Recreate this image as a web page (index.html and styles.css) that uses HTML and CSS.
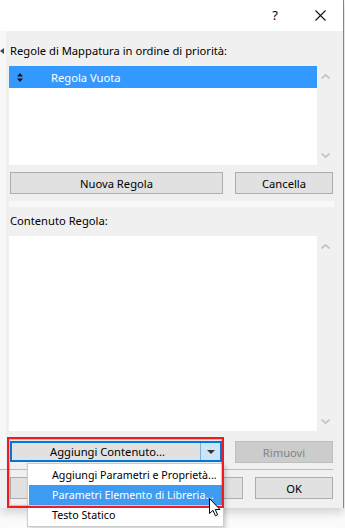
FILE: index.html
```html
<!DOCTYPE html>
<html lang="it">
<head>
    <meta charset="UTF-8">
    <title>Regole di Mappatura</title>
    <link rel="stylesheet" href="styles.css">
</head>
<body>
    <div class="window">
        <div class="titlebar">
            <span class="help">?</span>
            <span class="close">
                <svg width="11" height="11" viewBox="0 0 11 11"><path d="M0.5 0.5L10.5 10.5M10.5 0.5L0.5 10.5" stroke="#111" stroke-width="1.1" fill="none"/></svg>
            </span>
        </div>
        <div class="client">
            <div class="side"><span class="side-arrow"></span></div>
            <div class="main">
                <div class="label first">Regole di Mappatura in ordine di priorità:</div>
                <div class="list-row">
                    <div class="listbox rules">
                        <div class="rule selected">
                            <svg class="updown" width="6" height="9" viewBox="0 0 6 9"><path d="M3 0L6 3.5H0Z M3 9L6 5.5H0Z" fill="#111"/></svg>
                            <span>Regola Vuota</span>
                        </div>
                    </div>
                    <div class="scroll">
                        <svg width="9" height="5" viewBox="0 0 9 5"><path d="M0.5 4.5L4.5 0.8L8.5 4.5" stroke="#c2c2c2" stroke-width="1.6" fill="none"/></svg>
                        <svg width="9" height="5" viewBox="0 0 9 5"><path d="M0.5 0.5L4.5 4.2L8.5 0.5" stroke="#c2c2c2" stroke-width="1.6" fill="none"/></svg>
                    </div>
                </div>
                <div class="btn-row">
                    <button class="btn wide">Nuova Regola</button>
                    <button class="btn narrow">Cancella</button>
                </div>
                <div class="splitter"></div>
                <div class="label">Contenuto Regola:</div>
                <div class="list-row">
                    <div class="listbox content"></div>
                    <div class="scroll">
                        <svg width="9" height="5" viewBox="0 0 9 5"><path d="M0.5 4.5L4.5 0.8L8.5 4.5" stroke="#c2c2c2" stroke-width="1.6" fill="none"/></svg>
                        <svg width="9" height="5" viewBox="0 0 9 5"><path d="M0.5 0.5L4.5 4.2L8.5 0.5" stroke="#c2c2c2" stroke-width="1.6" fill="none"/></svg>
                    </div>
                </div>
                <div class="btn-row add-row">
                    <div class="split-btn">
                        <span class="split-main">Aggiungi Contenuto...</span>
                        <span class="split-drop"><span class="tri"></span></span>
                    </div>
                    <button class="btn narrow disabled">Rimuovi</button>
                </div>
            </div>
        </div>
        <div class="footer">
            <!-- these two are covered by the popup menu -->
            <button class="btn foot-a"></button>
            <button class="btn foot-b"></button>
            <button class="btn ok">OK</button>
            <span class="grip"></span>
        </div>
    </div>

    <div class="highlight"></div>
    <ul class="menu">
        <li>Aggiungi Parametri e Proprietà...</li>
        <li class="active">Parametri Elemento di Libreria...</li>
        <li>Testo Statico</li>
    </ul>
    <svg class="cursor" width="12" height="19" viewBox="0 0 12 19"><path d="M0.5 0.5V15.5L4 12.3L6.4 17.8L8.6 16.8L6.3 11.5H11Z" fill="#fff" stroke="#000" stroke-width="1" stroke-linejoin="round"/></svg>
</body>
</html>
```

FILE: styles.css
```css
body {
    margin: 0;
    width: 345px;
    height: 528px;
    overflow: hidden;
    background-color: #fbfbfb;
    font-family: 'Noto Sans', 'Liberation Sans', sans-serif;
    font-size: 11.2px;
    color: #000;
    position: relative;
}
.window {
    width: 343px;
    height: 508px;
    border-right: 1px solid #6d8cab;
    background-color: #f0f0f0;
    display: flex;
    flex-direction: column;
    box-shadow: 0 4px 10px rgba(0, 0, 0, 0.18);
}
.titlebar {
    height: 31px;
    flex-shrink: 0;
    background-color: #fff;
    display: flex;
    justify-content: flex-end;
    align-items: center;
}
.help {
    font-size: 13px;
    margin-right: 37px;
    margin-top: -1px;
}
.close {
    display: flex;
    margin-right: 17px;
}
.client {
    display: flex;
    height: 438px;
    flex-shrink: 0;
}
.side {
    width: 6px;
    background-color: #f7f7f7;
    position: relative;
}
.side-arrow {
    position: absolute;
    left: 0;
    top: 17px;
    border-top: 3px solid transparent;
    border-bottom: 3px solid transparent;
    border-right: 4px solid #444;
}
.main {
    width: 325px;
    padding: 12px 0 0 3px;
}
.label {
    line-height: 16px;
    margin-left: 1px;
    height: 16px;
    white-space: nowrap;
}
.list-row {
    display: flex;
    margin-top: 7px;
}
.listbox {
    width: 308px;
    background-color: #fff;
}
.rules { height: 99px; }
.content { height: 195px; }
.scroll {
    width: 17px;
    display: flex;
    flex-direction: column;
    justify-content: space-between;
    align-items: center;
    padding: 8px 0 7px;
}
.rule {
    height: 22px;
    display: flex;
    align-items: center;
    padding-left: 8px;
    background-color: #3399ff;
    color: #fff;
}
.updown { margin-right: 28px; }
.btn-row {
    display: flex;
    justify-content: space-between;
    margin: 7px 1px 0 1px;
}
.btn {
    height: 22px;
    background-color: #e1e1e1;
    border: 1px solid #adadad;
    font-family: inherit;
    font-size: 11.2px;
    color: #000;
    padding: 0;
}
.wide { width: 213px; }
.narrow { width: 98px; }
.disabled {
    background-color: #cccccc;
    border-color: #bfbfbf;
    color: #838383;
}
.splitter {
    height: 6px;
    margin-top: 7px;
    background-color: #f8f8f8;
    width: 325px;
}
.splitter + .label { margin-top: 6px; }
.add-row { margin-top: 10px; }
.split-btn {
    width: 208px;
    height: 17px;
    border: 2px solid #0078d7;
    display: flex;
}
.split-main {
    flex: 1;
    background-color: #e1e1e1;
    text-align: center;
    line-height: 17px;
    padding-left: 3px;
}
.split-drop {
    width: 19px;
    border-left: 1px solid #7ab2de;
    background-color: #cce4f7;
    display: flex;
    justify-content: center;
    align-items: center;
}
.tri {
    border-left: 4px solid transparent;
    border-right: 4px solid transparent;
    border-top: 4px solid #333;
}
.footer {
    height: 31px;
    flex-shrink: 0;
    border-top: 1px solid #bcbcbc;
    width: 323px;
    display: flex;
    gap: 12px;
    padding: 7px 0 0 10px;
    position: relative;
}
.foot-a { width: 110px; }
.foot-b { width: 111px; }
.ok { width: 78px; }
.grip {
    position: absolute;
    right: -18px;
    bottom: 2px;
    width: 6px;
    height: 6px;
    background-image: radial-gradient(circle, #b5b5b5 0.8px, transparent 1px);
    background-size: 2px 2px;
}
.highlight {
    position: absolute;
    left: 7px;
    top: 437px;
    width: 213px;
    height: 67px;
    border: 2px solid #ed1c24;
    box-shadow: inset 0 0 1px 1px rgba(237, 28, 36, 0.35);
    pointer-events: none;
    z-index: 3;
}
.menu {
    position: absolute;
    left: 27px;
    top: 463px;
    width: 193px;
    margin: 0;
    padding: 1px;
    list-style: none;
    background-color: #fff;
    border: 1px solid #cccccc;
    box-shadow: 2px 2px 4px rgba(0, 0, 0, 0.18);
    font-size: 10.7px;
    z-index: 2;
}
.menu li {
    height: 20px;
    line-height: 20px;
    padding-left: 23px;
    white-space: nowrap;
}
.menu .active {
    background-color: #3d9bf1;
    color: #fff;
}
.cursor {
    position: absolute;
    left: 209px;
    top: 498px;
    z-index: 4;
}
```
